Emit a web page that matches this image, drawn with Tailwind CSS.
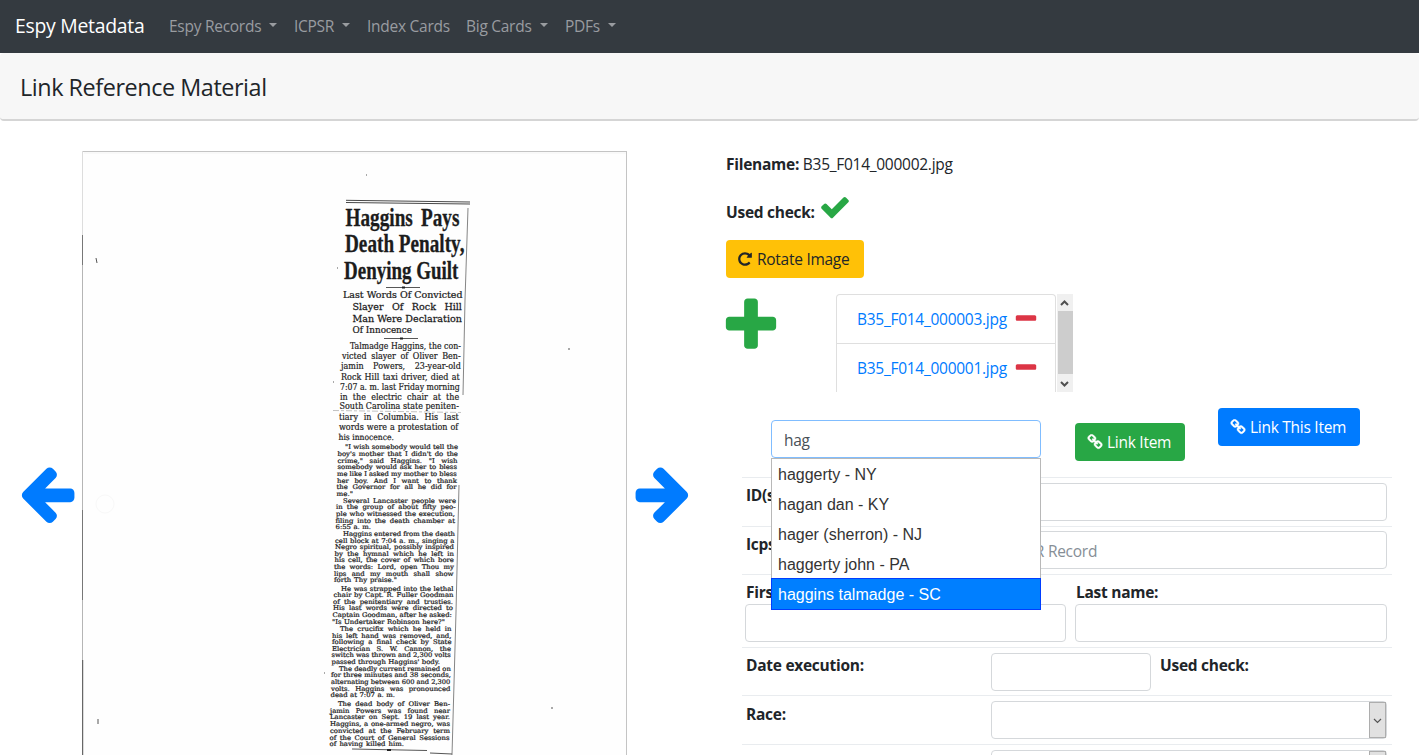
<!DOCTYPE html>
<html lang="en">
<head>
<meta charset="utf-8">
<title>Espy Metadata</title>
<script src="https://cdn.jsdelivr.net/npm/@tailwindcss/browser@4"></script>
</head>
<body class="h-[755px] overflow-hidden bg-white font-['Open_Sans',sans-serif] text-[15.5px] leading-6 tracking-[-0.27px] text-[#212529]">
<svg class="hidden">
  <symbol id="left" viewBox="0 0 1792 1792"><path d="M1664 896v128q0 53-32.5 90.5t-84.5 37.5h-704l293 294q38 36 38 90t-38 90l-75 76q-37 37-90 37-52 0-91-37l-651-652q-37-37-37-90 0-52 37-91l651-650q38-38 91-38 52 0 90 38l75 74q38 38 38 91t-38 91l-293 293h704q52 0 84.5 37.5t32.5 90.5z"/></symbol>
  <symbol id="right" viewBox="0 0 1792 1792"><path d="M1600 960q0 54-37 91l-651 651q-39 37-91 37-51 0-90-37l-75-75q-38-38-38-91t38-91l293-293h-704q-52 0-84.5-37.5t-32.5-90.5v-128q0-53 32.5-90.5t84.5-37.5h704l-293-294q-38-36-38-90t38-90l75-75q38-38 90-38 53 0 91 38l651 651q37 35 37 90z"/></symbol>
  <symbol id="check" viewBox="0 0 1792 1792"><path d="M1671 566q0 40-28 68l-724 724-136 136q-28 28-68 28t-68-28l-136-136-362-362q-28-28-28-68t28-68l136-136q28-28 68-28t68 28l294 295 656-657q28-28 68-28t68 28l136 136q28 28 28 68z"/></symbol>
  <symbol id="plus" viewBox="0 0 1792 1792"><path d="M1600 736v192q0 40-28 68t-68 28h-416v416q0 40-28 68t-68 28h-192q-40 0-68-28t-28-68v-416h-416q-40 0-68-28t-28-68v-192q0-40 28-68t68-28h416v-416q0-40 28-68t68-28h192q40 0 68 28t28 68v416h416q40 0 68 28t28 68z"/></symbol>
  <symbol id="minus" viewBox="0 0 1792 1792"><path d="M1600 736v192q0 40-28 68t-68 28h-1216q-40 0-68-28t-28-68v-192q0-40 28-68t68-28h1216q40 0 68 28t28 68z"/></symbol>
  <symbol id="repeat" viewBox="0 0 1792 1792"><path d="M1664 256v448q0 26-19 45t-45 19h-448q-42 0-59-40-17-39 14-69l138-138q-148-137-349-137-104 0-198.5 40.5t-163.5 109.5-109.5 163.5-40.5 198.5 40.5 198.5 109.5 163.5 163.5 109.5 198.5 40.5q119 0 225-52t179-147q7-10 23-12 15 0 25 9l137 138q9 8 9.5 20.5t-7.5 22.5q-109 132-264 204.5t-327 72.5q-156 0-298-61t-245-164-164-245-61-298 61-298 164-245 245-164 298-61q147 0 284.5 55.5t244.5 156.5l130-129q29-31 70-14 39 17 39 59z"/></symbol>
  <symbol id="chain" viewBox="0 0 1792 1792"><path d="M1520 1216q0-40-28-68l-208-208q-28-28-68-28-42 0-72 32 3 3 19 18.5t21.5 21.5 15 19 13 25.5 3.5 27.5q0 40-28 68t-68 28q-15 0-27.5-3.5t-25.5-13-19-15-21.5-21.5-18.5-19q-33 31-33 73 0 40 28 68l206 207q27 27 68 27 40 0 68-26l147-146q28-28 28-67zm-703-705q0-40-28-68l-206-207q-28-28-68-28-39 0-68 27l-147 146q-28 28-28 67 0 40 28 68l208 208q27 27 68 27 42 0 72-31-3-3-19-18.5t-21.5-21.5-15-19-13-25.5-3.5-27.5q0-40 28-68t68-28q15 0 27.5 3.5t25.5 13 19 15 21.5 21.5 18.5 19q33-31 33-73zm895 705q0 120-85 203l-147 146q-83 83-203 83-121 0-204-85l-206-207q-83-83-83-203 0-123 88-209l-88-88q-86 88-208 88-120 0-204-84l-208-208q-84-84-84-204t85-203l147-146q83-83 203-83 121 0 204 85l206 207q83 83 83 203 0 123-88 209l88 88q86-88 208-88 120 0 204 84l208 208q84 84 84 204z" stroke-width="50" stroke="#fff"/></symbol>
</svg>

<nav class="flex h-[53px] items-center bg-[#343a40] pb-px pl-[15px] whitespace-nowrap text-[#999ca0]">
  <a class="w-[154px] text-[19.4px] text-white">Espy Metadata</a>
  <a class="flex w-[125px] items-center">Espy Records<span class="mt-[-2px] ml-2 border-x-[4.5px] border-t-[4.5px] border-x-transparent border-t-current"></span></a>
  <a class="flex w-[73px] items-center">ICPSR<span class="mt-[-2px] ml-2 border-x-[4.5px] border-t-[4.5px] border-x-transparent border-t-current"></span></a>
  <a class="w-[99px]">Index Cards</a>
  <a class="flex w-[99px] items-center">Big Cards<span class="mt-[-2px] ml-2 border-x-[4.5px] border-t-[4.5px] border-x-transparent border-t-current"></span></a>
  <a class="flex items-center">PDFs<span class="mt-[-2px] ml-2 border-x-[4.5px] border-t-[4.5px] border-x-transparent border-t-current"></span></a>
</nav>

<header class="flex h-[68px] items-center rounded border-b-2 border-[#d5d5d5] bg-[#f7f7f7] pt-[2px] pl-5">
  <h1 class="text-[23.4px] tracking-[-0.44px]">Link Reference Material</h1>
</header>

<main class="flex h-[634px] items-start overflow-hidden pt-[30px] pl-[15px]">
  <svg class="mt-[310px] size-16 shrink-0 fill-[#007bff]"><use href="#left"/></svg>
  <svg id="scan" class="ml-[3px] h-[604px] w-[545px] shrink-0 tracking-normal" viewBox="82 151 545 604">
    <rect x="82" y="151" width="545" height="604" fill="#fefefe"/>
    <path d="M82 151.5H627" stroke="#c4c4c4"/>
    <path d="M84 153H627" stroke="#f9f9f9" stroke-width="2"/>
    <path d="M82.5 151V235" stroke="#ddd"/><path d="M82.5 235V265M82.5 510V600" stroke="#777"/><path d="M82.5 265V510M82.5 600V660" stroke="#b5b5b5"/>
    <path d="M82.7 660V755" stroke="#444"/>
    <path d="M626.5 151V755" stroke="#c4c4c4"/>
    <path d="M346 200.3L470 202M346 202.5L470 204" stroke="#333" stroke-width=".9" fill="none"/>
    <path d="M468 208L465 300L463 395M459 485L456 612L452 755" stroke="#777" stroke-width=".9" fill="none"/>
    <path d="M386 287.5H420M384 338.5H418M352 749L427 750.5" stroke="#444" stroke-width=".9"/>
    <path d="M402 287.5h3M400 338.5h3M387 750h4" stroke="#222" stroke-width="2"/>
    <path d="M333 410.5L463 412.5" stroke="#999" stroke-width=".6" stroke-dasharray="6 2 3 2"/>
    <path d="M96 258l1 5M98 719v5M333 382h1M569 348v2M552 707v2M324 673h1M337 268h1M366 175h1M430 753l22 1" stroke="#555"/>
    <circle cx="105" cy="504" r="9" fill="none" stroke="#f8f8f8"/>
  </svg>
  <svg class="mt-[310px] ml-[3.5px] size-16 shrink-0 fill-[#007bff]"><use href="#right"/></svg>

  <section class="ml-[31.5px] w-[666px] shrink-0">
    <p class="mt-px"><b>Filename:</b> B35_F014_000002.jpg</p>
    <div class="mt-[15px] flex h-[38px]"><b class="mt-[9px] w-[93px]">Used check:</b><svg class="size-8 fill-[#28a745]"><use href="#check"/></svg></div>
    <button class="mt-[11px] flex h-[38px] w-[138px] items-center rounded bg-[#ffc107] pl-[11px]"><svg class="mr-[4px] size-4 fill-[#212529]"><use href="#repeat"/></svg>Rotate Image</button>

    <div class="mt-4 flex h-[98px]">
      <svg class="ml-[-7px] size-16 fill-[#28a745]"><use href="#plus"/></svg>
      <div class="ml-[53px] h-[98px] w-[220px] overflow-hidden rounded-t border border-b-0 border-[#dfdfdf] text-[#007bff]">
        <div class="flex h-[49px] items-center border-b border-[#dfdfdf] pl-5"><span class="w-[156px]">B35_F014_000003.jpg</span><svg class="size-[26px] fill-[#dc3545]"><use href="#minus"/></svg></div>
        <div class="flex h-[48px] items-center pl-5"><span class="w-[156px]">B35_F014_000001.jpg</span><svg class="size-[26px] fill-[#dc3545]"><use href="#minus"/></svg></div>
      </div>
      <div class="ml-px flex h-[98px] w-4 flex-col items-center justify-between bg-[#f0f0f0]">
        <svg class="h-[17px] w-4" viewBox="0 0 16 17" fill="none" stroke="#505050" stroke-width="2"><path d="M4 11L7.5 7.5L11 11"/></svg>
        <div class="h-[63px] w-[15px] bg-[#cdcdcd]"></div>
        <svg class="h-[18px] w-4" viewBox="0 0 16 18" fill="none" stroke="#505050" stroke-width="2"><path d="M4 8L7.5 11.5L11 8"/></svg>
      </div>
    </div>

    <div class="mt-4 flex items-start pl-[45px]">
      <div class="relative mt-3 w-[270px]">
        <div class="h-[38px] rounded border border-[#80bdff] bg-white py-[7px] pl-3 text-[#495057]">hag</div>
        <ul class="absolute top-[38px] left-0 z-10 w-[270px] border border-[#b8b8b8] bg-white font-['Liberation_Sans',sans-serif] text-base tracking-normal text-[#333]">
          <li class="h-[30px] pt-1 pl-[6px]">haggerty - NY</li>
          <li class="h-[30px] pt-1 pl-[6px]">hagan dan - KY</li>
          <li class="h-[30px] pt-1 pl-[6px]">hager (sherron) - NJ</li>
          <li class="h-[29px] pt-1 pl-[6px]">haggerty john - PA</li>
          <li class="-mx-px -mb-px h-8 border border-[#003eff] bg-[#007fff] pt-1 pl-[6px] text-white">haggins talmadge - SC</li>
        </ul>
      </div>
      <button class="mt-[15px] ml-[34px] flex h-[38px] w-[110px] items-center rounded bg-[#28a745] pl-3 text-white"><svg class="mr-[4px] size-4 fill-white"><use href="#chain"/></svg>Link Item</button>
      <button class="ml-[33px] flex h-[38px] w-[142px] items-center rounded bg-[#007bff] pl-3 text-white"><svg class="mr-[4px] size-4 fill-white"><use href="#chain"/></svg>Link This Item</button>
    </div>

    <form class="mt-4 ml-4 w-[650px] font-bold">
      <div class="flex h-[49px] border-t border-[#e9ecef] pt-[5px] pl-1"><label class="w-[245px]">ID(s):</label><div class="h-[38px] w-[396px] rounded border border-[#d5d8db]"></div></div>
      <div class="flex h-12 border-t border-[#e9ecef] pt-1 pl-1"><label class="w-[245px] pt-px">Icpsr id:</label><div class="h-[38px] w-[396px] rounded border border-[#d5d8db] py-[7px] pl-3 font-normal text-[#868e96]">ICPSR Record</div></div>
      <div class="flex h-[73px] gap-[9px] border-t border-[#e9ecef] pt-[5px] pl-[3px]">
        <div class="w-[321px]"><label class="block h-6 pl-px">First name:</label><div class="h-[38px] rounded border border-[#d5d8db]"></div></div>
        <div class="w-[312px]"><label class="block h-6 pl-px">Last name:</label><div class="h-[38px] rounded border border-[#d5d8db]"></div></div>
      </div>
      <div class="flex h-12 border-t border-[#e9ecef] pt-[5px] pl-1"><label class="w-[245px]">Date execution:</label><div class="h-[38px] w-40 rounded border border-[#d5d8db]"></div><span class="pl-[9px]">Used check:</span></div>
      <div class="flex h-[49px] border-t border-[#e9ecef] pt-[5px] pl-1"><label class="w-[245px] pt-px">Race:</label>
        <div class="flex h-[38px] w-[396px] justify-end rounded border border-[#d5d8db]"><svg class="h-9 w-[17px] border border-[#adadad] bg-[#e1e1e1]" viewBox="0 0 15 34" fill="none" stroke="#555" stroke-width="1.2"><path d="M4 16l3.5 3.5L11 16"/></svg></div></div>
      <div class="flex h-12 border-t border-[#e9ecef] pt-[5px] pl-1"><span class="w-[245px]"></span>
        <div class="flex h-[38px] w-[396px] justify-end rounded border border-[#d5d8db]"><div class="h-9 w-[17px] border border-[#adadad] bg-[#e1e1e1]"></div></div></div>
    </form>
  </section>
</main>

<script>
// Type styles of the article: font size, horizontal scale, family, weight, stroke width
const styles = {
  head: [26, 0.74, 'Liberation Serif', 700, 0.3],
  deck: [9.4, 1.02, 'DejaVu Serif', 400, 0.25],
  lead: [8.3, 0.97, 'DejaVu Serif', 400, 0.2],
  body: [6.4, 1.08, 'DejaVu Serif', 400, 0.22]
};
// Article lines: left, right, baseline, style, text
const lines = [
[345.5,459.5,225.5,'head','Haggins Pays'],[345,464.5,251.8,'head','Death Penalty,'],[344,458.5,278.5,'head','Denying Guilt'],
[343,462.5,298.3,'deck','Last Words Of Convicted'],[352.5,462,310.2,'deck','Slayer Of Rock Hill'],[352.5,462,322,'deck','Man Were Declaration'],[352.5,412,333.2,'deck','Of Innocence'],
[350,461,349,'lead','Talmadge Haggins, the con-'],[342,461,359,'lead','victed slayer of Oliver Ben-'],[341,461,369,'lead','jamin Powers, 23-year-old'],[341,460,379.5,'lead','Rock Hill taxi driver, died at'],[340,460,389.5,'lead','7:07 a. m. last Friday morning'],[340,459.5,399.5,'lead','in the electric chair at the'],[339.5,459,409.3,'lead','South Carolina state peniten-'],[339,459,419.5,'lead','tiary in Columbia. His last'],[339,458.5,429.8,'lead','words were a protestation of'],[338.5,394,439.6,'lead','his innocence.'],
[345,458,449.3,'body','"I wish somebody would tell the'],[337.5,458,456,'body',"boy's mother that I didn't do the"],[337.5,457.5,462.8,'body','crime," said Haggins. "I wish'],[337.5,457,469.3,'body','somebody would ask her to bless'],[337,457,476,'body','me like I asked my mother to bless'],[337,457,482.5,'body','her boy. And I want to thank'],[336.5,456.5,489,'body','the Governor for all he did for'],[336.5,353,495.5,'body','me."'],
[343,456,502.7,'body','Several Lancaster people were'],[336,455.5,509.2,'body','in the group of about fifty peo-'],[336,455,516,'body','ple who witnessed the execution,'],[335.5,455,522.6,'body','filing into the death chamber at'],[335.5,371,529,'body','6:55 a. m.'],
[343,455,536,'body','Haggins entered from the death'],[335,454.5,542.6,'body','cell block at 7:04 a. m., singing a'],[335,454,549.3,'body','Negro spiritual, possibly inspired'],[334.5,454,555.8,'body','by the hymnal which he left in'],[334.5,454,562.4,'body','his cell, the cover of which bore'],[334,454,569,'body','the words: Lord, open Thou my'],[334,453.5,575.5,'body','lips and my mouth shall show'],[334,397,582,'body','forth Thy praise."'],
[341,453.5,590.5,'body','He was strapped into the lethal'],[333.5,453.5,597,'body','chair by Capt. R. Fuller Goodman'],[333,453,603.8,'body','of the penitentiary and trusties.'],[333,453,610.4,'body','His last words were directed to'],[332.5,452,617,'body','Captain Goodman, after he asked:'],[332,445,624,'body','"Is Undertaker Robinson here?"'],
[340,451.5,631,'body','The crucifix which he held in'],[332,451.5,637.5,'body','his left hand was removed, and,'],[332,451.5,644,'body','following a final check by State'],[332,451,650.5,'body','Electrician S. W. Cannon, the'],[331.5,451,657.2,'body','switch was thrown and 2,300 volts'],[331.5,440,664,'body',"passed through Haggins' body."],
[339,451,670.7,'body','The deadly current remained on'],[331,451,677.3,'body','for three minutes and 38 seconds,'],[331,450.5,684,'body','alternating between 600 and 2,300'],[331,450.5,690.6,'body','volts. Haggins was pronounced'],[330.5,395,697.2,'body','dead at 7:07 a. m.'],
[338,450,706,'body','The dead body of Oliver Ben-'],[330,450,712.6,'body','jamin Powers was found near'],[330,450,719.3,'body','Lancaster on Sept. 19 last year.'],[330,450,726,'body','Haggins, a one-armed negro, was'],[330,450,732.7,'body','convicted at the February term'],[329.5,449.5,739.5,'body','of the Court of General Sessions'],[329.5,404,746.2,'body','of having killed him.']
];
const scan = document.getElementById('scan');
for (const [x1, x2, y, style, text] of lines) {
  const [size, k, family, weight, stroke] = styles[style];
  const t = document.createElementNS('http://www.w3.org/2000/svg', 'text');
  const attrs = {'font-size': size, 'font-family': family + ', serif', 'font-weight': weight, fill: '#1c1c1c', stroke: '#1c1c1c', 'stroke-width': stroke};
  for (const a in attrs) t.setAttribute(a, attrs[a]);
  t.textContent = text;
  scan.appendChild(t);
  // Justify: wider word gaps when the line is short, narrower glyphs when it is long
  const natural = t.getComputedTextLength(), width = x2 - x1, gaps = text.split(' ').length - 1;
  let scale = k;
  if (natural * k > width || !gaps) scale = width / natural;
  else t.setAttribute('word-spacing', (width / k - natural) / gaps);
  t.setAttribute('transform', `translate(${x1} ${y}) scale(${scale} 1)`);
}
</script>
</body>
</html>
